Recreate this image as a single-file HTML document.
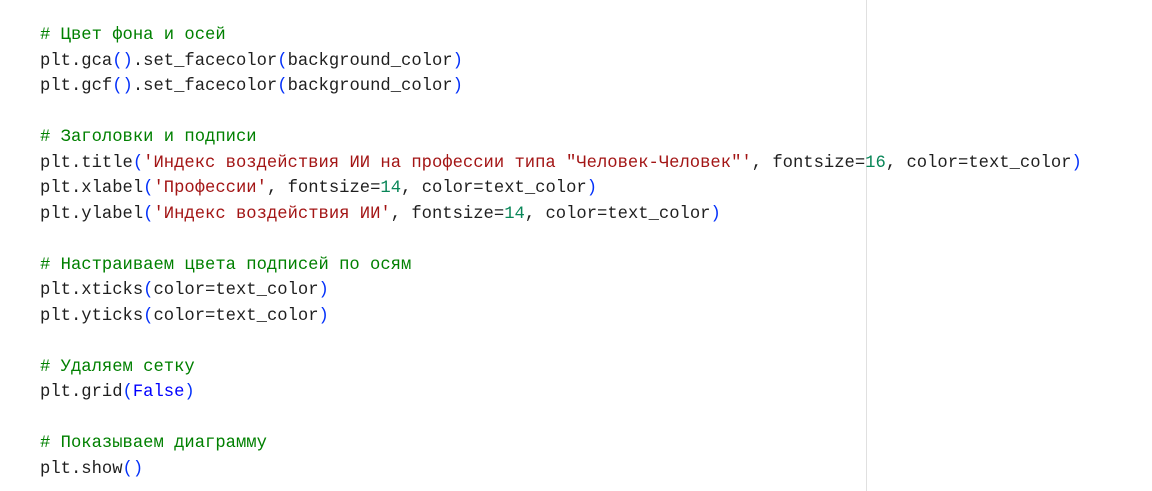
<!DOCTYPE html>
<html><head><meta charset="utf-8"><style>
html,body{margin:0;padding:0;background:#fff;width:1152px;height:491px;overflow:hidden;position:relative}
pre{position:absolute;left:40px;top:23px;margin:0;font-family:"Liberation Mono","DejaVu Sans Mono",monospace;font-size:17.2px;line-height:25.5px;color:#1f1f1f}
.c{color:#008000}.s{color:#a31515}.n{color:#098658}.b{color:#0431fa}.k{color:#0000ff}
.v{position:absolute;left:866px;top:0;width:1px;height:491px;background:#e0e0e0}
</style></head><body>
<div class="v"></div>
<pre><span class="c"># Цвет фона и осей</span>
plt.gca<span class="b">()</span>.set_facecolor<span class="b">(</span>background_color<span class="b">)</span>
plt.gcf<span class="b">()</span>.set_facecolor<span class="b">(</span>background_color<span class="b">)</span>

<span class="c"># Заголовки и подписи</span>
plt.title<span class="b">(</span><span class="s">'Индекс воздействия ИИ на профессии типа "Человек-Человек"'</span>, fontsize=<span class="n">16</span>, color=text_color<span class="b">)</span>
plt.xlabel<span class="b">(</span><span class="s">'Профессии'</span>, fontsize=<span class="n">14</span>, color=text_color<span class="b">)</span>
plt.ylabel<span class="b">(</span><span class="s">'Индекс воздействия ИИ'</span>, fontsize=<span class="n">14</span>, color=text_color<span class="b">)</span>

<span class="c"># Настраиваем цвета подписей по осям</span>
plt.xticks<span class="b">(</span>color=text_color<span class="b">)</span>
plt.yticks<span class="b">(</span>color=text_color<span class="b">)</span>

<span class="c"># Удаляем сетку</span>
plt.grid<span class="b">(</span><span class="k">False</span><span class="b">)</span>

<span class="c"># Показываем диаграмму</span>
plt.show<span class="b">()</span></pre>
</body></html>
